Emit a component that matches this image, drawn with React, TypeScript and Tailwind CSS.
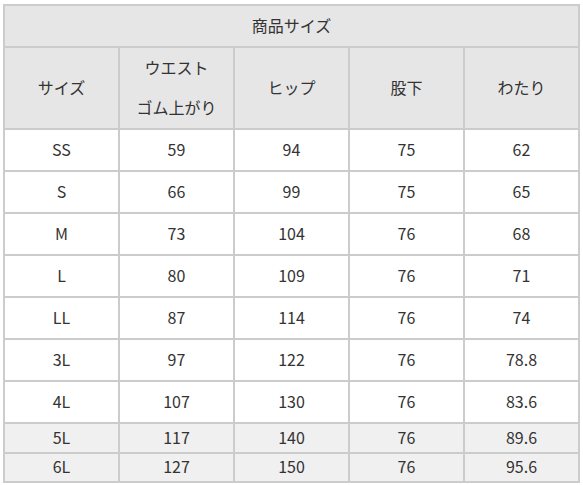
const rows: { size: string; vals: string[]; h: string; shade?: boolean }[] = [
  { size: "SS", vals: ["59", "94", "75", "62"], h: "h-[40px]" },
  { size: "S", vals: ["66", "99", "75", "65"], h: "h-[40px]" },
  { size: "M", vals: ["73", "104", "76", "68"], h: "h-[40px]" },
  { size: "L", vals: ["80", "109", "76", "71"], h: "h-[40px]" },
  { size: "LL", vals: ["87", "114", "76", "74"], h: "h-[40px]" },
  { size: "3L", vals: ["97", "122", "76", "78.8"], h: "h-[40px]" },
  { size: "4L", vals: ["107", "130", "76", "83.6"], h: "h-[40px]" },
  { size: "5L", vals: ["117", "140", "76", "89.6"], h: "h-[28px]", shade: true },
  { size: "6L", vals: ["127", "150", "76", "95.6"], h: "h-[27px]", shade: true },
];

const cell = "flex items-center justify-center pb-[3px] text-center";

export default function App() {
  return (
    <div className="min-h-[485px] bg-white pl-[3px] pt-[4px] text-[16px] text-[#333] [font-family:'Noto_Sans_CJK_JP','Noto_Sans',sans-serif]">
      <div className="grid w-[577px] grid-cols-[repeat(5,113px)] gap-[2px] border-2 border-[#cccccc] bg-[#cccccc]">
        <div className={`${cell} col-span-5 h-[40px] bg-[#e6e6e6]`}>商品サイズ</div>
        {["サイズ", "ウエスト", "ヒップ", "股下", "わたり"].map((t, i) => (
          <div key={t} className={`${cell} h-[80px] bg-[#e6e6e6]`}>
            {i === 1 ? (
              <div className="leading-[40px]">
                ウエスト
                <br />
                ゴム上がり
              </div>
            ) : (
              t
            )}
          </div>
        ))}
        {rows.map((r) =>
          [r.size, ...r.vals].map((v, i) => (
            <div key={r.size + i} className={`${cell} ${r.h} ${r.shade ? "bg-[#f0f0f0]" : "bg-white"}`}>
              {v}
            </div>
          ))
        )}
      </div>
    </div>
  );
}
